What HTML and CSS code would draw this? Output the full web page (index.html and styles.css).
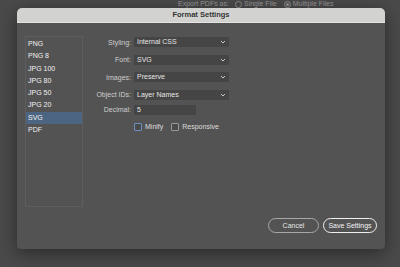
FILE: index.html
```html
<!DOCTYPE html>
<html lang="en">
<head>
  <meta charset="UTF-8" />
  <title>Format Settings</title>
  <link rel="stylesheet" href="styles.css">
</head>
<body>
  <div class="behind">
    <span>Export PDFs as:</span>
    <span class="radio"></span><span>Single File</span>
    <span class="radio on"></span><span>Multiple Files</span>
  </div>

  <div class="dialog">
    <div class="titlebar">Format Settings</div>
    <div class="dialog-body">
      <ul class="formats">
        <li>PNG</li>
        <li>PNG 8</li>
        <li>JPG 100</li>
        <li>JPG 80</li>
        <li>JPG 50</li>
        <li>JPG 20</li>
        <li class="selected">SVG</li>
        <li>PDF</li>
      </ul>

      <div class="options">
        <div class="row">
          <label>Styling:</label>
          <div class="select">Internal CSS<svg viewBox="0 0 6 4"><path d="M1 1l2 2 2-2" /></svg></div>
        </div>
        <div class="row">
          <label>Font:</label>
          <div class="select">SVG<svg viewBox="0 0 6 4"><path d="M1 1l2 2 2-2" /></svg></div>
        </div>
        <div class="row">
          <label>Images:</label>
          <div class="select">Preserve<svg viewBox="0 0 6 4"><path d="M1 1l2 2 2-2" /></svg></div>
        </div>
        <div class="row">
          <label>Object IDs:</label>
          <div class="select">Layer Names<svg viewBox="0 0 6 4"><path d="M1 1l2 2 2-2" /></svg></div>
        </div>
        <div class="row decimal">
          <label>Decimal:</label>
          <div class="field">5</div>
        </div>
        <div class="checks">
          <span class="box focus"></span><span>Minify</span>
          <span class="box"></span><span>Responsive</span>
        </div>
      </div>
    </div>
    <div class="buttons">
      <button class="btn">Cancel</button>
      <button class="btn primary">Save Settings</button>
    </div>
  </div>
</body>
</html>
```

FILE: styles.css
```css
body {
  margin: 0;
  width: 400px;
  height: 267px;
  overflow: hidden;
  background: #4a4a4a;
  font-family: "Liberation Sans", Arial, sans-serif;
  font-size: 7px;
  color: #e6e6e6;
}
.behind {
  height: 8px;
  padding-left: 178px;
  display: flex;
  align-items: center;
  gap: 2px;
  font-size: 7px;
  line-height: 8px;
  color: #8e8e8e;
}
.behind span:first-child {
  margin-right: 4px;
}
.radio {
  width: 5px;
  height: 5px;
  border: 1px solid #858585;
  border-radius: 50%;
}
.radio.on {
  margin-left: 5px;
  background: radial-gradient(circle, #858585 35%, transparent 45%);
}
.dialog {
  margin-left: 17px;
  width: 368px;
  height: 241px;
  background: #535353;
  border-radius: 5px 5px 4px 4px;
  box-shadow: 0 4px 18px rgba(0,0,0,0.45);
  display: flex;
  flex-direction: column;
}
.titlebar {
  height: 14px;
  line-height: 14px;
  text-align: center;
  background: #d2d3d1;
  border-bottom: 1px solid #e4e4e2;
  border-radius: 5px 5px 0 0;
  color: #333;
  font-weight: bold;
  font-size: 7.5px;
}
.dialog-body {
  flex: 1;
  display: flex;
  padding: 13px 8px 0;
}
.formats {
  list-style: none;
  margin: 0;
  padding: 1px 0 0;
  width: 56px;
  height: 168px;
  border: 1px solid #5e5e5e;
}
.formats li {
  height: 12.3px;
  line-height: 12.3px;
  padding-left: 2px;
  color: #f2f2f2;
}
.formats li.selected {
  background: #4c6582;
}
.options {
  margin-left: 5px;
  padding-top: 1px;
  display: flex;
  flex-direction: column;
  gap: 7.6px;
}
.row {
  display: flex;
  align-items: center;
  height: 10px;
}
.row label {
  width: 43px;
  text-align: right;
  padding-right: 3px;
  color: #cdcdcd;
}
.select {
  width: 92px;
  height: 10px;
  padding-left: 3px;
  line-height: 10px;
  background: #454545;
  display: flex;
  align-items: center;
  justify-content: space-between;
}
.select svg {
  width: 6px;
  height: 4px;
  margin-right: 3px;
  fill: none;
  stroke: #c8c8c8;
  stroke-width: 1;
}
.row.decimal {
  margin-top: -2.4px;
}
.field {
  width: 59px;
  height: 10px;
  padding-left: 3px;
  line-height: 10px;
  background: #454545;
}
.checks {
  display: flex;
  align-items: center;
  gap: 3px;
  padding-left: 46px;
  color: #dedede;
}
.box {
  width: 6px;
  height: 6px;
  border: 1px solid #9a9a9a;
  border-radius: 1px;
  background: #4a4a4a;
}
.box.focus {
  border-color: #6f8fc4;
}
.checks .box:nth-of-type(3) {
  margin-left: 5px;
}
.buttons {
  display: flex;
  justify-content: flex-end;
  gap: 4px;
  padding: 0 8px 16px;
}
.btn {
  height: 15px;
  padding: 0;
  width: 51px;
  border: 1px solid #a8a8a8;
  border-radius: 8px;
  background: #535353;
  color: #e6e6e6;
  font-family: inherit;
  font-size: 7px;
}
.btn.primary {
  width: 54px;
  border: 1.5px solid #f0f0f0;
  color: #f4f4f4;
}
```
